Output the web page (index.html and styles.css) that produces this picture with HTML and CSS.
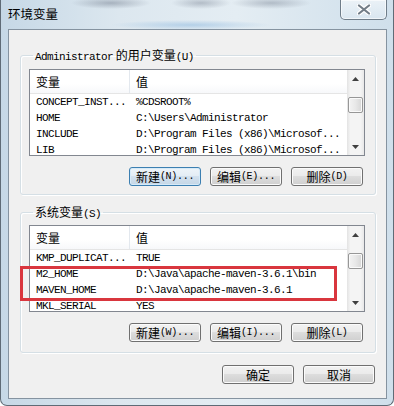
FILE: index.html
```html
<!DOCTYPE html>
<html lang="zh-CN">
<head>
  <meta charset="UTF-8">
  <title>环境变量</title>
  <link rel="stylesheet" href="styles.css">
</head>
<body>
  <div class="window">
    <div class="titlebar">
      <span class="title">环境变量</span>
      <div class="close">
        <svg width="14" height="11" viewBox="0 0 14 11">
          <path d="M2 1.5 L12 9.5 M12 1.5 L2 9.5" stroke="#fff" stroke-width="4.5" stroke-linecap="round"/>
          <path d="M2 1.5 L12 9.5 M12 1.5 L2 9.5" stroke="#737d87" stroke-width="2.2" stroke-linecap="round"/>
        </svg>
      </div>
    </div>

    <div class="client">
      <fieldset class="group group-user">
        <legend><span class="mono">Administrator</span> 的用户变量<span class="mono">(U)</span></legend>
        <div class="list-wrap">
          <div class="list">
            <div class="list-body">
              <div class="list-head"><span class="col-name">变量</span><span class="col-val">值</span></div>
              <div class="row"><span class="col-name">CONCEPT_INST...</span><span class="col-val">%CDSROOT%</span></div>
              <div class="row"><span class="col-name">HOME</span><span class="col-val">C:\Users\Administrator</span></div>
              <div class="row"><span class="col-name">INCLUDE</span><span class="col-val">D:\Program Files (x86)\Microsof...</span></div>
              <div class="row"><span class="col-name">LIB</span><span class="col-val">D:\Program Files (x86)\Microsof...</span></div>
            </div>
            <div class="vscroll">
              <div class="sb-btn"><svg width="7" height="4" viewBox="0 0 7 4"><polygon points="3.5,0 7,4 0,4" fill="#404040"/></svg></div>
              <div class="sb-track"><div class="sb-thumb"></div></div>
              <div class="sb-btn"><svg width="7" height="4" viewBox="0 0 7 4"><polygon points="0,0 7,0 3.5,4" fill="#404040"/></svg></div>
            </div>
          </div>
        </div>
        <div class="btn-row">
          <button class="btn btn-default">新建<span class="mono">(N)...</span></button>
          <button class="btn">编辑<span class="mono">(E)...</span></button>
          <button class="btn">删除<span class="mono">(D)</span></button>
        </div>
      </fieldset>

      <fieldset class="group group-sys">
        <legend>系统变量<span class="mono">(S)</span></legend>
        <div class="list-wrap">
          <div class="list">
            <div class="list-body">
              <div class="list-head"><span class="col-name">变量</span><span class="col-val">值</span></div>
              <div class="row"><span class="col-name">KMP_DUPLICAT...</span><span class="col-val">TRUE</span></div>
              <div class="row"><span class="col-name">M2_HOME</span><span class="col-val">D:\Java\apache-maven-3.6.1\bin</span></div>
              <div class="row"><span class="col-name">MAVEN_HOME</span><span class="col-val">D:\Java\apache-maven-3.6.1</span></div>
              <div class="row"><span class="col-name">MKL_SERIAL</span><span class="col-val">YES</span></div>
            </div>
            <div class="vscroll">
              <div class="sb-btn"><svg width="7" height="4" viewBox="0 0 7 4"><polygon points="3.5,0 7,4 0,4" fill="#404040"/></svg></div>
              <div class="sb-track"><div class="sb-thumb"></div></div>
              <div class="sb-btn"><svg width="7" height="4" viewBox="0 0 7 4"><polygon points="0,0 7,0 3.5,4" fill="#404040"/></svg></div>
            </div>
          </div>
          <div class="highlight"></div>
        </div>
        <div class="btn-row">
          <button class="btn">新建<span class="mono">(W)...</span></button>
          <button class="btn">编辑<span class="mono">(I)...</span></button>
          <button class="btn">删除<span class="mono">(L)</span></button>
        </div>
      </fieldset>

      <div class="dialog-buttons">
        <button class="btn">确定</button>
        <button class="btn">取消</button>
      </div>
    </div>
  </div>
</body>
</html>
```

FILE: styles.css
```css
* {
  box-sizing: border-box;
}

body {
  margin: 0;
  width: 394px;
  height: 406px;
  overflow: hidden;
  font-family: "Noto Sans CJK SC", sans-serif;
  font-size: 12px;
  color: #000;
  background: #fff;
}

.mono {
  font-family: "Liberation Mono", "Noto Sans CJK SC", monospace;
  font-size: 11px;
  letter-spacing: -0.6px;
}

.window {
  width: 394px;
  height: 406px;
  display: flex;
  flex-direction: column;
  padding: 0 6px 6px 7px;
  border: 1px solid #5f6b76;
  border-top: none;
  border-radius: 0 0 7px 7px;
  background:
    radial-gradient(ellipse 40px 6px at 110px 3px, rgba(70, 80, 100, 0.35), transparent),
    radial-gradient(ellipse 30px 6px at 200px 3px, rgba(70, 80, 100, 0.3), transparent),
    radial-gradient(ellipse 40px 6px at 270px 3px, rgba(70, 80, 100, 0.3), transparent),
    radial-gradient(ellipse 80px 5px at 190px 25px, rgba(150, 190, 225, 0.6), transparent),
    linear-gradient(90deg, #c6d8e6 0%, #dce7ef 30%, #e4edf3 60%, #cfdfeb 100%);
}

.titlebar {
  height: 29px;
  flex: none;
  display: flex;
  justify-content: space-between;
  align-items: flex-start;
}

.title {
  margin-top: 6px;
  font-size: 12.5px;
  line-height: 16px;
  color: #000;
}

.close {
  width: 47px;
  height: 20px;
  display: flex;
  align-items: center;
  justify-content: center;
  border: 1px solid #6f7d89;
  border-top: none;
  border-radius: 0 0 5px 5px;
  background: linear-gradient(rgba(255, 255, 255, 0.55), rgba(225, 236, 244, 0.5));
  box-shadow: inset 0 0 0 1px rgba(255, 255, 255, 0.6);
}

.client {
  flex: 1;
  display: flex;
  flex-direction: column;
  background: #f0f0f0;
  border: 1px solid #8593a0;
}

.group {
  margin: 0 10px 0 11px;
  border: 1px solid #d5dfe5;
  border-radius: 3px;
  box-shadow: inset 1px 1px 0 #fff, 1px 1px 0 #fff;
  min-width: 0;
}

.group legend {
  margin-left: 4px;
  padding: 0 2px;
  line-height: 14px;
  height: 14px;
}

.group-user {
  margin-top: 18px;
  padding: 7px 11px 8px 8px;
}

.group-sys {
  margin-top: 10px;
  padding: 6px 11px 10px 8px;
}

.list-wrap {
  position: relative;
}

.list {
  width: 336px;
  height: 87px;
  display: flex;
  overflow: hidden;
  background: #fff;
  border: 1px solid #828790;
}

.list-body {
  flex: 1;
  overflow: hidden;
}

.list-head {
  height: 24px;
  display: flex;
  align-items: center;
  border-bottom: 1px solid #e5e5e5;
  background: linear-gradient(#ffffff, #ffffff 60%, #f7f8fa);
  font-size: 12px;
}

.list-head .col-name {
  align-self: stretch;
  display: flex;
  align-items: center;
  border-right: 1px solid #e3e8ee;
}

.col-name {
  width: 100px;
  flex: none;
  padding-left: 6px;
  white-space: nowrap;
}

.col-val {
  padding-left: 6px;
  white-space: nowrap;
}

.row {
  height: 16px;
  display: flex;
  align-items: center;
  font-family: "Liberation Mono", monospace;
  font-size: 11px;
  letter-spacing: -0.6px;
  color: #000;
}

.list-body .row:first-of-type {
  margin-top: 1px;
}

.vscroll {
  width: 17px;
  flex: none;
  display: flex;
  flex-direction: column;
  background: linear-gradient(90deg, #e3e3e3, #f4f4f4 20%, #f4f4f4 80%, #e8e8e8);
}

.sb-btn {
  height: 17px;
  flex: none;
  display: flex;
  align-items: center;
  justify-content: center;
}

.sb-track {
  flex: 1;
  display: flex;
  flex-direction: column;
}

.sb-thumb {
  height: 16px;
  margin: 10px 1px 0;
  border: 1px solid #979797;
  border-radius: 2px;
  background: linear-gradient(90deg, #f3f3f3, #e8e8e8 50%, #d6d6d6);
  box-shadow: inset 0 0 0 1px #fafafa;
}

.highlight {
  position: absolute;
  left: -9px;
  top: 41px;
  width: 317px;
  height: 35px;
  border: 3px solid #d9363e;
}

.btn-row {
  display: flex;
  justify-content: flex-end;
  gap: 9px;
  margin-top: 11px;
  padding-right: 1px;
}

.btn {
  width: 72px;
  height: 19px;
  padding: 0;
  display: flex;
  align-items: center;
  justify-content: center;
  border: 1px solid #707070;
  border-radius: 3px;
  background: linear-gradient(#f2f2f2 0%, #ebebeb 45%, #dddddd 50%, #cfcfcf 100%);
  box-shadow: inset 0 0 0 1px #fbfbfb;
  font-family: "Noto Sans CJK SC", sans-serif;
  font-size: 12px;
  color: #000;
}

.btn .mono {
  font-size: 10px;
  letter-spacing: -0.3px;
}

.btn-default {
  border-color: #3c7fb1;
  background: linear-gradient(#eef4f9 0%, #e4edf5 45%, #d3e1ee 50%, #c4d6e6 100%);
  box-shadow: inset 0 0 0 1px #d6eaf8;
}

.dialog-buttons {
  display: flex;
  justify-content: flex-end;
  gap: 9px;
  margin: 12px 11px 0 0;
}
```
